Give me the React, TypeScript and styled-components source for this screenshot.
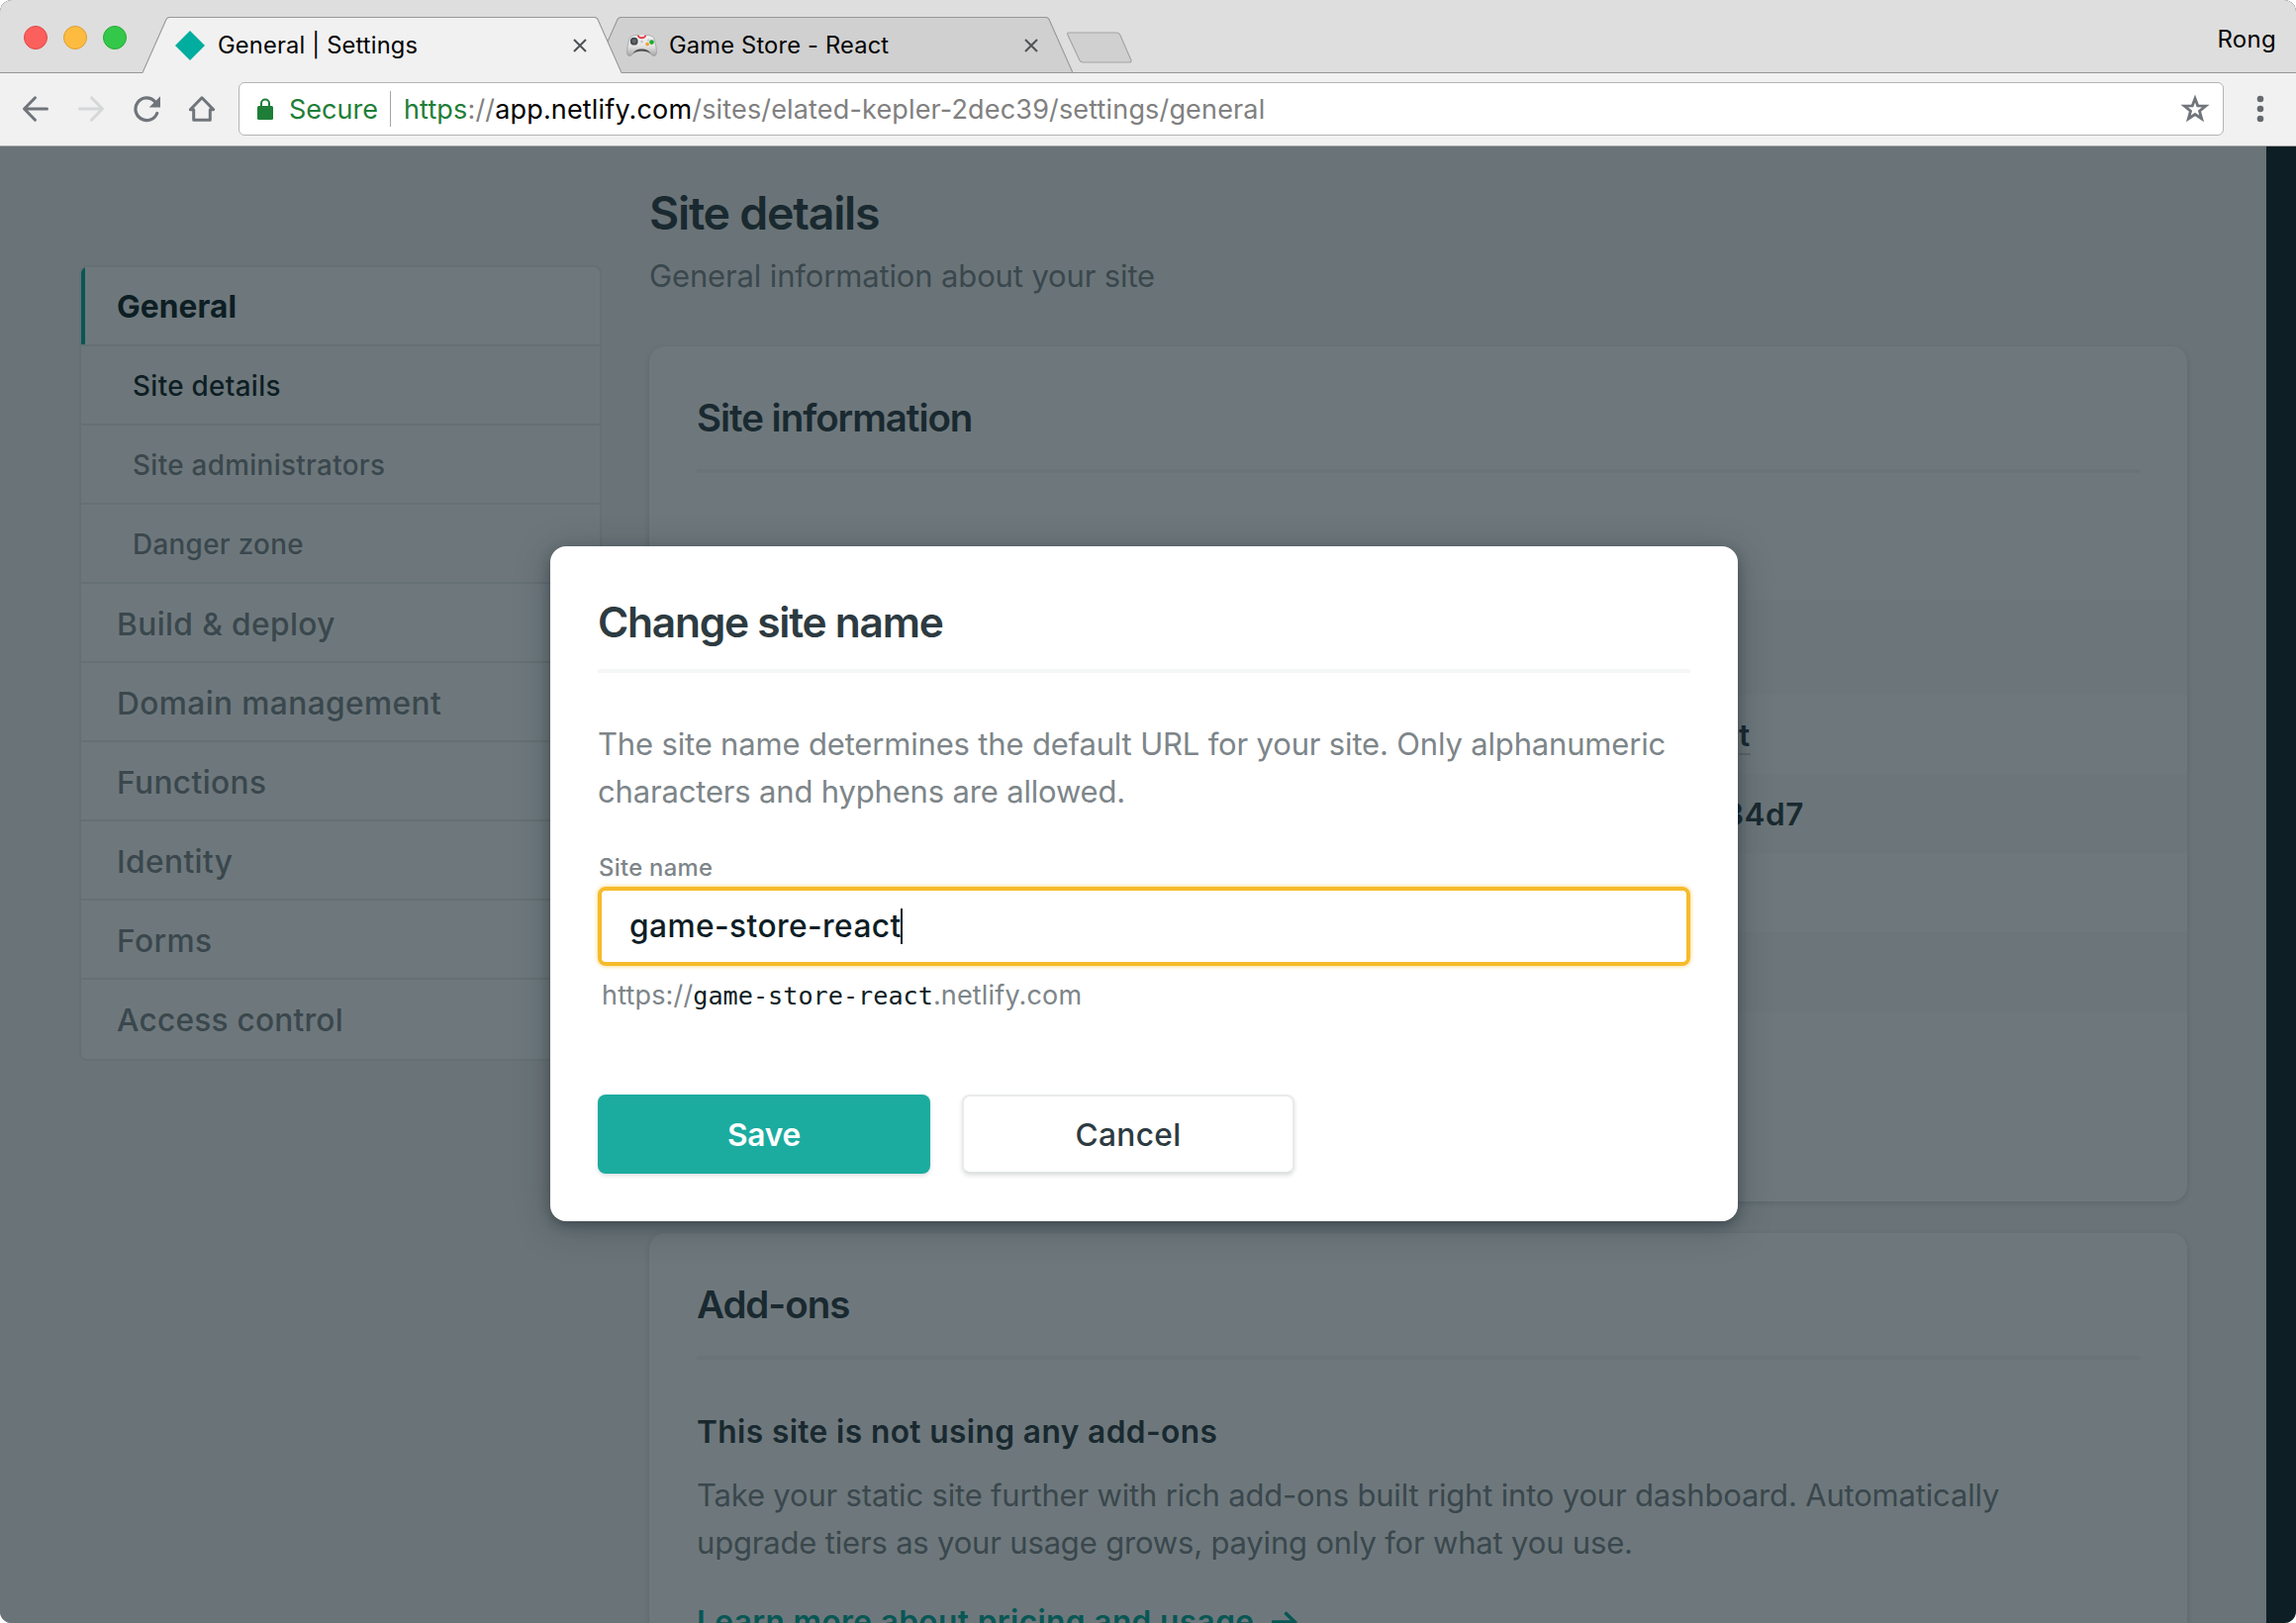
import React from 'react';
import styled, { createGlobalStyle, css } from 'styled-components';

const ink = '#0e1e25';
const heading = '#2d3b41';
const muted = '#7d8589';
const teal = '#00ad9f';
const chromeGrey = '#70757b';

const GlobalStyle = createGlobalStyle`
  * { box-sizing: border-box; }
  html, body { margin: 0; padding: 0; background: #fff; }
  body {
    font-family: Inter, "Liberation Sans", sans-serif;
    color: ${ink};
    -webkit-font-smoothing: antialiased;
  }
`;

const Window = styled.div`
  width: 2320px;
  height: 1640px;
  display: flex;
  flex-direction: column;
  overflow: hidden;
  border-radius: 12px;
  background: ${ink};
`;

/* ---------- browser chrome ---------- */

const TitleBar = styled.header`
  flex: none;
  height: 74px;
  display: flex;
  align-items: flex-end;
  background: #dedede;
  box-shadow: inset 0 -1px 0 #979797;
`;

const Lights = styled.div`
  display: flex;
  gap: 16px;
  align-self: flex-start;
  width: 144px;
  padding: 26px 0 0 24px;
`;

const Light = styled.span<{ $fill: string; $edge: string }>`
  width: 24px;
  height: 24px;
  border-radius: 50%;
  background: ${p => p.$fill};
  border: 1px solid ${p => p.$edge};
`;

const TabBox = styled.div<{ $active?: boolean }>`
  position: relative;
  z-index: ${p => (p.$active ? 2 : 1)};
  width: 484px;
  height: 57px;
  display: flex;
  align-items: center;
  padding: 1px 35px 0 33px;

  & + & {
    margin-left: -28px;
  }
`;

const TabShape = styled.svg`
  position: absolute;
  inset: 0;
  z-index: -1;
`;

const TabIcon = styled.span`
  width: 31px;
  display: flex;
`;

const TabTitle = styled.span`
  flex: 1;
  margin-left: 12px;
  font-size: 23.7px;
  line-height: 30px;
  letter-spacing: 0.17px;
  color: #000;
  white-space: nowrap;
`;

const NewTab = styled.svg`
  margin: 0 0 10px -7px;
`;

const Profile = styled.span`
  align-self: flex-start;
  margin: 25px 20px 0 auto;
  font-size: 24px;
  line-height: 30px;
  letter-spacing: 0.3px;
  color: #000;
`;

const Toolbar = styled.div`
  flex: none;
  height: 74px;
  display: flex;
  align-items: center;
  gap: 28px;
  padding: 0 32px 1px 22px;
  background: #f1f1f1;
  border-bottom: 1px solid #a9a9a9;
`;

const ToolIcon = styled.svg`
  flex: none;
`;

const AddressBar = styled.div`
  flex: 1;
  height: 54px;
  display: flex;
  align-items: center;
  margin: 0 5px 0 -5px;
  padding: 0 13px 0 18px;
  border: 1px solid #b4b4b4;
  border-radius: 6px;
  background: #fff;
  font-size: 27px;
  line-height: 34px;
  white-space: nowrap;
`;

const Secure = styled.span`
  margin-left: 16px;
  padding: 2px 12px 0 0;
  border-right: 1px solid #a5a5a5;
  color: #1e7e37;
`;

const Url = styled.span`
  flex: 1;
  margin-left: 13px;
  padding-top: 2px;
  letter-spacing: 0.16px;
  color: #808080;
`;

const Scheme = styled.span`
  color: #1e7e37;
`;

const Host = styled.span`
  color: #000;
`;

/* ---------- settings page ---------- */

const Viewport = styled.div`
  position: relative;
  flex: 1;
  min-height: 0;
  overflow: hidden;
`;

const Page = styled.div`
  width: 2290px;
  display: flex;
  align-items: flex-start;
  gap: 48px;
  padding: 0 80px;
  background: #f5f5f5;
`;

const SideNav = styled.nav`
  flex: none;
  width: 528px;
  margin-top: 120px;
  overflow: hidden;
  border: 2px solid #e9ebeb;
  border-radius: 8px;
  background: #fff;
`;

const NavItem = styled.a<{ $sub?: boolean; $current?: boolean; $active?: boolean }>`
  display: block;
  height: 80px;
  padding: 3px 0 0 36px;
  border-bottom: 2px solid #e9ebeb;
  font-size: 31.7px;
  font-weight: 500;
  line-height: 76px;
  letter-spacing: 0.38px;
  color: ${muted};

  &:last-child {
    border-bottom: 0;
    letter-spacing: 0.2px;
  }

  ${p => p.$sub && css`
    padding: 2px 0 0 52px;
    font-size: 27.8px;
    letter-spacing: 0.34px;
    background: #fcfcfc;
  `}
  ${p => p.$current && css`
    color: ${ink};
  `}
  ${p => p.$active && css`
    padding-top: 2px;
    font-weight: 700;
    letter-spacing: 0.05px;
    box-shadow: inset 4px 0 0 ${teal};
  `}
`;

const Main = styled.main`
  flex: 1;
  height: 1492px;
  padding-top: 39px;
`;

const PageTitle = styled.h1`
  margin: 0;
  font-size: 46.5px;
  font-weight: 600;
  line-height: 56px;
  letter-spacing: -1.25px;
  color: ${heading};
`;

const Lead = styled.p`
  margin: 12px 0 47px;
  font-size: 31px;
  line-height: 48px;
  letter-spacing: -0.14px;
  color: ${muted};
`;

const Card = styled.section<{ $height: number }>`
  height: ${p => p.$height}px;
  margin-bottom: 32px;
  border-radius: 16px;
  background: #fff;
  box-shadow: 0 2px 6px rgba(14, 30, 37, 0.16);
`;

const CardTitle = styled.h2`
  margin: 0 48px 48px;
  padding: 48px 0 28px;
  border-bottom: 4px solid #f5f6f6;
  font-size: 38.5px;
  font-weight: 600;
  line-height: 48px;
  letter-spacing: -1.04px;
  color: ${heading};
`;

const InfoRow = styled.div<{ $tall?: boolean }>`
  height: ${p => (p.$tall ? 96 : 80)}px;
  font-size: 31.5px;
  font-weight: 600;
  line-height: 81px;
  letter-spacing: 0.5px;
  color: ${heading};

  &:nth-of-type(even) {
    background: #f9fafa;
  }
`;

const InfoValue = styled.span<{ $indent: number; $linked?: boolean }>`
  display: inline-block;
  margin-left: ${p => p.$indent}px;
  line-height: 37px;
  ${p => p.$linked && css`
    border-bottom: 2px solid #d3d6d7;
  `}
`;

const CardBody = styled.div`
  padding: 1px 48px 0;
  font-size: 31px;
  line-height: 48px;
`;

const Strong = styled.p`
  margin: 0 0 16px;
  font-size: 31.7px;
  font-weight: 600;
  letter-spacing: 0.38px;
  color: ${heading};
`;

const Text = styled.p`
  margin: 0 0 32px;
  letter-spacing: -0.18px;
  color: ${muted};
`;

const LearnMore = styled.a`
  display: flex;
  align-items: center;
  gap: 18px;
  font-size: 31.7px;
  font-weight: 600;
  letter-spacing: 0.35px;
  color: ${teal};
`;

/* ---------- dialog ---------- */

const Overlay = styled.div`
  position: absolute;
  inset: 0;
  display: flex;
  justify-content: center;
  align-items: flex-start;
  padding: 404px 8px 0 0;
  background: rgba(14, 30, 37, 0.6);
`;

const Dialog = styled.div`
  width: 1200px;
  height: 682px;
  padding: 48px;
  border-radius: 16px;
  background: #fff;
  box-shadow: 0 4px 12px rgba(14, 30, 37, 0.35), 0 6px 36px rgba(14, 30, 37, 0.28);
`;

const DialogTitle = styled.h2`
  margin: 0 0 48px;
  padding: 1px 0 19px;
  border-bottom: 4px solid #f5f6f6;
  font-size: 42.5px;
  font-weight: 600;
  line-height: 56px;
  letter-spacing: -1.27px;
  color: ${heading};
`;

const DialogText = styled.p`
  margin: 0;
  font-size: 31px;
  line-height: 48px;
  letter-spacing: -0.17px;
  color: ${muted};
`;

const Label = styled.label`
  display: block;
  margin: 37px 0 3px;
  padding-left: 1px;
  font-size: 23.8px;
  font-weight: 500;
  line-height: 32px;
  letter-spacing: 0.3px;
  color: ${muted};
`;

const Field = styled.div`
  height: 80px;
  display: flex;
  align-items: center;
  padding: 0 28px;
  border: 4px solid #f6bb2c;
  border-radius: 8px;
  box-shadow: 0 0 4px rgba(246, 187, 44, 0.7);
  font-size: 31.7px;
  font-weight: 500;
  line-height: 40px;
  letter-spacing: 0.4px;
`;

const Caret = styled.span`
  width: 2px;
  height: 36px;
  margin-left: -1px;
  background: ${ink};
`;

const Hint = styled.p`
  height: 48px;
  margin: 6px 0 76px;
  padding-left: 4px;
  font-size: 27px;
  line-height: 48px;
  letter-spacing: 0.16px;
  color: ${muted};
`;

const HintName = styled.span`
  font-family: "DejaVu Sans Mono", monospace;
  font-size: 25.2px;
  letter-spacing: 0;
  color: ${ink};
`;

const Actions = styled.div`
  display: flex;
  gap: 32px;
`;

const Button = styled.button<{ $primary?: boolean }>`
  width: 336px;
  height: 80px;
  padding: 1px 0 0;
  border: 2px solid #e9ebeb;
  border-bottom-color: #dee2e2;
  border-radius: 8px;
  background: #fff;
  box-shadow: 0 2px 4px rgba(14, 30, 37, 0.14);
  font: 500 31.7px/40px Inter, "Liberation Sans", sans-serif;
  letter-spacing: 0.3px;
  color: ${heading};

  ${p => p.$primary && css`
    border: 0;
    background: #1bac9f;
    font-weight: 600;
    letter-spacing: -0.2px;
    color: #fff;
  `}
`;

/* ---------- pieces ---------- */

function Tab({ title, icon, active }: { title: string; icon: React.ReactNode; active?: boolean }) {
  return (
    <TabBox $active={active}>
      <TabShape width="484" height="57" viewBox="0 0 484 57">
        <path
          d="M0 57V56.5L24 2.6Q25 .5 27.5 .5H456.5Q459 .5 460 2.6L484 56.5V57Z"
          fill={active ? '#f1f1f1' : '#d0d0d0'}
        />
        <path
          d={'M0 56.5L24 2.6Q25 .5 27.5 .5H456.5Q459 .5 460 2.6L484 56.5' + (active ? '' : 'H0')}
          fill="none"
          stroke="#979797"
          strokeWidth="1.1"
        />
      </TabShape>
      <TabIcon>{icon}</TabIcon>
      <TabTitle>{title}</TabTitle>
      <ToolIcon width="14" height="14" viewBox="0 0 14 14">
        <path d="M1 1l12 12M13 1L1 13" stroke="#505356" strokeWidth="2" />
      </ToolIcon>
    </TabBox>
  );
}

const NetlifyMark = () => (
  <svg width="30" height="30" viewBox="0 0 30 30">
    <path d="M15 0l15 15-15 15L0 15z" fill={teal} />
  </svg>
);

const Gamepad = () => (
  <svg width="32" height="24" viewBox="0 0 32 24">
    <defs>
      <linearGradient id="pad" x1="0" y1="0" x2="0" y2="1">
        <stop offset="0" stopColor="#f4f4f4" />
        <stop offset=".55" stopColor="#e2e2e2" />
        <stop offset="1" stopColor="#a4a4a4" />
      </linearGradient>
    </defs>
    <path
      d="M4.500 3Q8 .8 11 1.200L13 2H19L21 1.200Q24 .8 27.500 3Q29.500 5 31 14Q32.300 22 29.500 22.800Q27.500 23.300 25 20.500Q22.500 17.500 16 17.500T7 20.500Q4.500 23.300 2.500 22.800Q-.3 22 1 14Q2.500 5 4.500 3Z"
      fill="url(#pad)"
      stroke="#8f8f8f"
      strokeWidth=".6"
    />
    <path d="M6.500 20.500Q9 15.500 16 15.500T25.500 20.500Q22 17.800 16 17.800T6.500 20.500Z" fill="#4a4a4a" />
    <path d="M11 1.300H21Q19.500 5 16 5T11 1.300Z" fill="#e0393c" />
    <path d="M13 .8H19L18 3H14Z" fill="#ececec" />
    <circle cx="8" cy="7.500" r="4" fill="#44484b" />
    <circle cx="8" cy="7.500" r="2.200" fill="#64686c" />
    <circle cx="16" cy="8" r="1.200" fill="#bdbdbd" />
    <circle cx="26.300" cy="8.500" r="2.400" fill="#17ad2c" />
    <circle cx="21.800" cy="10.500" r="1.900" fill="#f3a32a" />
    <circle cx="23" cy="6.500" r="1.500" fill="#cdd0d3" />
  </svg>
);

const NavArrow = ({ color, forward }: { color: string; forward?: boolean }) => (
  <ToolIcon width="28" height="28" viewBox="0 0 28 28">
    <path
      d={forward ? 'M14.500 2.800L25.500 14L14.500 25.200M25 14H2.500' : 'M13.500 2.800L2.500 14L13.500 25.200M3 14H25.500'}
      fill="none"
      stroke={color}
      strokeWidth="3"
      strokeLinecap="round"
      strokeLinejoin="round"
    />
  </ToolIcon>
);

const Reload = () => (
  <ToolIcon width="28" height="28" viewBox="0 0 28 28">
    <path
      d="M24.700 18.500A11.300 11.300 0 1 1 22.300 6.300"
      fill="none"
      stroke={chromeGrey}
      strokeWidth="3.200"
      strokeLinecap="round"
    />
    <path d="M28 1.200V12.500H16.700Z" fill={chromeGrey} />
  </ToolIcon>
);

const Home = () => (
  <ToolIcon width="28" height="28" viewBox="0 0 28 28">
    <path
      d="M2.300 14.800L14 2.800L25.700 14.800H22.300V25.300H5.700V14.800Z"
      fill="none"
      stroke={chromeGrey}
      strokeWidth="3"
      strokeLinejoin="round"
    />
  </ToolIcon>
);

const Lock = () => (
  <ToolIcon width="16" height="22" viewBox="0 0 16 22">
    <path d="M4 9V5.500a4 4 0 0 1 8 0V9" fill="none" stroke="#1e7e37" strokeWidth="2" />
    <rect y="8" width="16" height="14" rx="1.500" fill="#1e7e37" />
  </ToolIcon>
);

const Star = () => (
  <ToolIcon width="30" height="30" viewBox="0 0 30 30">
    <path
      d="M15 4.500L17.700 11.800L25.800 12.100L19.500 17.200L21.700 25L15 20.500L8.300 25L10.500 17.200L4.200 12.100L12.300 11.800Z"
      fill="none"
      stroke={chromeGrey}
      strokeWidth="2.800"
    />
  </ToolIcon>
);

const Dots = () => (
  <ToolIcon width="8" height="28" viewBox="0 0 8 28">
    {[4, 14, 24].map(y => (
      <circle key={y} cx="4" cy={y} r="3.300" fill="#666a6f" />
    ))}
  </ToolIcon>
);

const navItems = ['Build & deploy', 'Domain management', 'Functions', 'Identity', 'Forms', 'Access control'];

export default function App() {
  return (
    <>
      <GlobalStyle />
      <Window>
        <TitleBar>
          <Lights>
            <Light $fill="#fc605c" $edge="#e04744" />
            <Light $fill="#fdbc40" $edge="#dd9d33" />
            <Light $fill="#34c84a" $edge="#27aa35" />
          </Lights>
          <Tab active title="General | Settings" icon={<NetlifyMark />} />
          <Tab title="Game Store - React" icon={<Gamepad />} />
          <NewTab width="68" height="32" viewBox="0 0 68 32">
            <path
              d="M3 1H51.500Q53.800 1 54.800 3.200L65.800 28.500Q66.800 31 64 31H17.500Q14.800 31 13.700 28.500L1.800 3Q1 1 3 1Z"
              fill="#d0d0d0"
              stroke="#a3a3a3"
              strokeWidth="1.100"
            />
          </NewTab>
          <Profile>Rong</Profile>
        </TitleBar>
        <Toolbar>
          <NavArrow color={chromeGrey} />
          <NavArrow color="#d5d7d9" forward />
          <Reload />
          <Home />
          <AddressBar>
            <Lock />
            <Secure>Secure</Secure>
            <Url>
              <Scheme>https</Scheme>://<Host>app.netlify.com</Host>/sites/elated-kepler-2dec39/settings/general
            </Url>
            <Star />
          </AddressBar>
          <Dots />
        </Toolbar>

        <Viewport>
          <Page>
            <SideNav>
              <NavItem $current $active>General</NavItem>
              <NavItem $sub $current>Site details</NavItem>
              <NavItem $sub>Site administrators</NavItem>
              <NavItem $sub>Danger zone</NavItem>
              {navItems.map(label => (
                <NavItem key={label}>{label}</NavItem>
              ))}
            </SideNav>
            <Main>
              <PageTitle>Site details</PageTitle>
              <Lead>General information about your site</Lead>
              <Card $height={864}>
                <CardTitle>Site information</CardTitle>
                <InfoRow />
                <InfoRow $tall />
                <InfoRow>
                  <InfoValue $indent={1101} $linked>t</InfoValue>
                </InfoRow>
                <InfoRow>
                  <InfoValue $indent={1086}>34d7</InfoValue>
                </InfoRow>
                <InfoRow />
                <InfoRow />
              </Card>
              <Card $height={600}>
                <CardTitle>Add-ons</CardTitle>
                <CardBody>
                  <Strong>This site is not using any add-ons</Strong>
                  <Text>
                    Take your static site further with rich add-ons built right into your dashboard. Automatically
                    <br />
                    upgrade tiers as your usage grows, paying only for what you use.
                  </Text>
                  <LearnMore>
                    Learn more about pricing and usage
                    <svg width="26" height="22" viewBox="0 0 26 22">
                      <path d="M0 11H23M13.500 1.500L23.500 11L13.500 20.500" fill="none" stroke={teal} strokeWidth="3.600" />
                    </svg>
                  </LearnMore>
                </CardBody>
              </Card>
            </Main>
          </Page>
          <Overlay>
            <Dialog>
              <DialogTitle>Change site name</DialogTitle>
              <DialogText>
                The site name determines the default URL for your site. Only alphanumeric
                <br />
                characters and hyphens are allowed.
              </DialogText>
              <Label>Site name</Label>
              <Field>
                game-store-react
                <Caret />
              </Field>
              <Hint>
                https://<HintName>game-store-react</HintName>.netlify.com
              </Hint>
              <Actions>
                <Button $primary>Save</Button>
                <Button>Cancel</Button>
              </Actions>
            </Dialog>
          </Overlay>
        </Viewport>
      </Window>
    </>
  );
}
